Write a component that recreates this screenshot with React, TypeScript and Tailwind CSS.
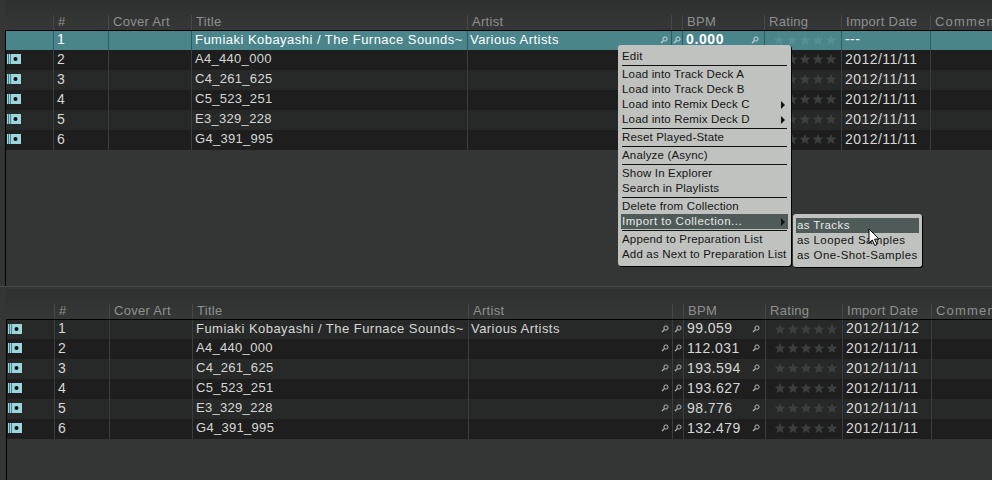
import React from 'react'

const tracks = [
  { n: 1, title: 'Fumiaki Kobayashi / The Furnace Sounds~', artist: 'Various Artists', bpm: '99.059', date: '2012/11/12' },
  { n: 2, title: 'A4_440_000', artist: '', bpm: '112.031', date: '2012/11/11' },
  { n: 3, title: 'C4_261_625', artist: '', bpm: '193.594', date: '2012/11/11' },
  { n: 4, title: 'C5_523_251', artist: '', bpm: '193.627', date: '2012/11/11' },
  { n: 5, title: 'E3_329_228', artist: '', bpm: '98.776', date: '2012/11/11' },
  { n: 6, title: 'G4_391_995', artist: '', bpm: '132.479', date: '2012/11/11' },
]

function TrackIcon() {
  return (
    <svg width="14" height="10" viewBox="0 0 14 10" className="block">
      <rect width="14" height="10" fill="#9ad6de" />
      <rect x="1" width="1" height="10" fill="#4d7f88" />
      <rect x="3" width="1" height="10" fill="#4d7f88" />
      <circle cx="8.5" cy="5" r="2" fill="#0b0f10" />
    </svg>
  )
}

function Lens({ color = '#b5b7b6' }: { color?: string }) {
  return (
    <svg width="8" height="8" viewBox="0 0 8 8" fill="none" stroke={color} className="block">
      <circle cx="5" cy="3" r="2.1" strokeWidth="1" />
      <path d="M3.4 4.6 L1 7" strokeWidth="1.3" />
    </svg>
  )
}

function Stars({ color }: { color: string }) {
  return (
    <div className="flex gap-[1px]">
      {[0, 1, 2, 3, 4].map((i) => (
        <svg key={i} width="12" height="12" viewBox="0 0 12 12" className="block">
          <path d="M6 .8 7.5 4.4 11.4 4.7 8.4 7.2 9.4 11 6 9 2.6 11 3.6 7.2 .6 4.7 4.5 4.4Z" fill={color} />
        </svg>
      ))}
    </div>
  )
}

function HeaderCell({ label, className }: { label: string; className: string }) {
  return (
    <div className={`flex h-[15px] shrink-0 items-center whitespace-nowrap border-l border-[#454847] pb-[1px] pl-[4px] text-[#8e908f] ${className}`}>
      {label}
    </div>
  )
}

function Header() {
  return (
    <div className="flex h-[30px] items-end bg-gradient-to-b from-[#2e302f] to-[#353837]">
      <div className="h-[15px] w-[48px] shrink-0" />
      <HeaderCell label="#" className="w-[55px]" />
      <HeaderCell label="Cover Art" className="w-[83px]" />
      <HeaderCell label="Title" className="w-[276px]" />
      <HeaderCell label="Artist" className="w-[204px]" />
      <HeaderCell label="" className="w-[11px]" />
      <HeaderCell label="BPM" className="w-[82px]" />
      <HeaderCell label="Rating" className="w-[77px]" />
      <HeaderCell label="Import Date" className="w-[89px]" />
      <HeaderCell label="Comment" className="w-[80px] tracking-[1.2px]" />
    </div>
  )
}

type Track = (typeof tracks)[number]

function Row({ t, selected, first }: { t: Track; selected: boolean; first: boolean }) {
  const line = selected ? 'border-[#2d5d63]' : 'border-[#3a3d3c]'
  const cell = `flex h-full shrink-0 items-center whitespace-nowrap border-l pb-[2px] ${line}`
  const bg = selected
    ? 'bg-[#4a858c] text-white'
    : t.n % 2 === 0
      ? 'bg-[#1d1e1d] text-[#d6d7d6]'
      : 'bg-[#272928] text-[#d6d7d6]'
  const lens = selected ? '#c4dadc' : '#b5b7b6'
  return (
    <div className={`flex ${first ? 'h-[19px]' : 'h-5'} ${bg}`}>
      <div className="flex h-full w-[47px] shrink-0 items-center pb-[2px] pl-[1px]">{!selected && <TrackIcon />}</div>
      <div className={`${cell} w-[55px] pl-[3px] text-[14px]`}>{t.n}</div>
      <div className={`${cell} w-[83px]`} />
      <div className={`${cell} w-[276px] pl-[3px] ${t.n === 1 ? 'tracking-[0.47px]' : ''}`}>{t.title}</div>
      <div className={`${cell} w-[204px] justify-between pl-[2px] pr-[3px] tracking-[0.45px]`}>
        <span>{t.artist}</span>
        <Lens color={lens} />
      </div>
      <div className={`${cell} w-[11px] pl-[1px]`}>
        <Lens color={lens} />
      </div>
      <div className={`${cell} w-[82px] justify-between pl-[3px] pr-[5px] text-[14px]`}>
        <span className={selected ? 'font-bold tracking-[0.6px]' : 'tracking-[0.45px]'}>{selected ? '0.000' : t.bpm}</span>
        <Lens color={lens} />
      </div>
      <div className={`${cell} w-[77px] pl-[8px]`}>
        <Stars color={selected ? '#578f95' : '#3d3f3e'} />
      </div>
      <div className={`${cell} w-[89px] pl-[3px] text-[14px] tracking-[0.45px]`}>{selected ? '---' : t.date}</div>
      <div className={`${cell} w-[80px]`} />
    </div>
  )
}

function TrackTable({ selectFirst, inset }: { selectFirst: boolean; inset: string }) {
  return (
    <div className={`flex w-[1000px] flex-col ${inset}`}>
      <Header />
      <div className="border-l border-t border-black">
        {tracks.map((t, i) => (
          <Row key={t.n} t={t} selected={selectFirst && i === 0} first={i === 0} />
        ))}
      </div>
    </div>
  )
}

function Sep() {
  return <div className="mx-[1px] my-[1px] h-[1px] bg-[#111]" />
}

function MenuItem({ label, arrow, active, wide }: { label: string; arrow?: boolean; active?: boolean; wide?: boolean }) {
  return (
    <div
      className={`flex h-[15px] items-center justify-between whitespace-nowrap pl-[1px] pr-[3px] ${active ? 'bg-[#4e5b58] text-[#e8e9e8]' : 'text-[#141514]'}`}
    >
      <span className={wide ? 'tracking-[0.5px]' : ''}>{label}</span>
      {arrow && <span className="h-0 w-0 border-y-[4px] border-l-[4px] border-y-transparent border-l-[#111]" />}
    </div>
  )
}

function ContextMenu() {
  return (
    <div className="absolute left-[618px] top-[45px] w-[173px] rounded-[3px] bg-[#c0c2bf] px-[3px] pb-[4px] pt-[4px] text-[11.5px] tracking-[0.17px] shadow-[1px_1px_0_#000]">
      <MenuItem label="Edit" />
      <Sep />
      <MenuItem label="Load into Track Deck A" />
      <MenuItem label="Load into Track Deck B" />
      <MenuItem label="Load into Remix Deck C" arrow />
      <MenuItem label="Load into Remix Deck D" arrow />
      <Sep />
      <MenuItem label="Reset Played-State" />
      <Sep />
      <MenuItem label="Analyze (Async)" />
      <Sep />
      <MenuItem label="Show In Explorer" />
      <MenuItem label="Search in Playlists" />
      <Sep />
      <MenuItem label="Delete from Collection" />
      <MenuItem label="Import to Collection..." arrow active wide />
      <Sep />
      <MenuItem label="Append to Preparation List" />
      <MenuItem label="Add as Next to Preparation List" />
    </div>
  )
}

function SubMenu() {
  return (
    <div className="absolute left-[793px] top-[214px] w-[129px] rounded-[3px] bg-[#c0c2bf] px-[3px] py-[4px] text-[11.5px] tracking-[0.4px] shadow-[1px_1px_0_#000]">
      <MenuItem label="as Tracks" active />
      <MenuItem label="as Looped Samples" />
      <MenuItem label="as One-Shot-Samples" />
    </div>
  )
}

function Cursor() {
  return (
    <svg width="13" height="19" viewBox="0 0 13 19" className="absolute left-[868px] top-[228px]">
      <path d="M1 1 L1 15 L4.3 12 L6.8 17.5 L9 16.5 L6.6 11.2 L11 11 Z" fill="#fff" stroke="#000" strokeWidth="1" />
    </svg>
  )
}

export default function App() {
  return (
    <div className="relative h-[480px] w-[992px] overflow-hidden bg-[#333635] text-[13px] tracking-[0.3px] [font-family:'Liberation_Sans',sans-serif]">
      <div className="relative h-[287px] border-b border-[#464947]">
        <TrackTable selectFirst inset="pl-[5px]" />
        <div className="absolute bottom-0 left-[5px] top-[30px] w-[1px] bg-black" />
      </div>
      <div className="relative h-[193px] pt-[2px]">
        <TrackTable selectFirst={false} inset="pl-[6px]" />
        <div className="absolute bottom-0 left-[6px] top-[32px] w-[1px] bg-black" />
      </div>
      <ContextMenu />
      <SubMenu />
      <Cursor />
    </div>
  )
}
